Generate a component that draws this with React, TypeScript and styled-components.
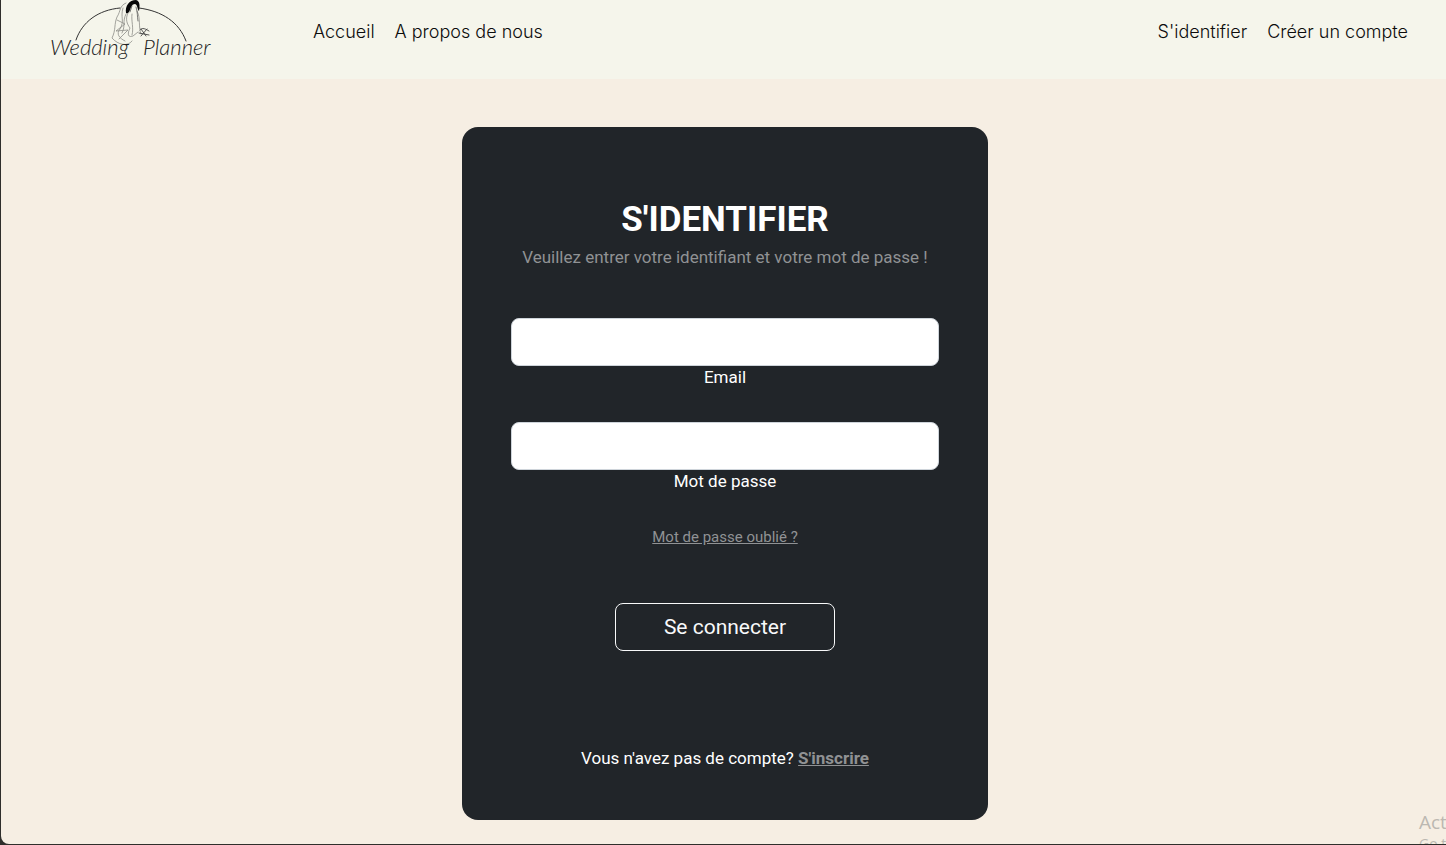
import React from "react";
import styled, { createGlobalStyle } from "styled-components";

const GlobalStyle = createGlobalStyle`
  * { box-sizing: border-box; }
  body { margin: 0; background: #2f2e2b; font-family: Roboto, sans-serif; font-size: 17px; line-height: 22px; }
`;

const Page = styled.div`
  position: relative;
  display: flex;
  flex-direction: column;
  min-height: calc(100vh - 1px);
  margin-left: 1px;
  background: #f6eee3;
  border-bottom-left-radius: 8px;
  overflow: hidden;
`;

const Header = styled.header`
  display: flex;
  align-items: flex-start;
  height: 79px;
  padding: 0 38px 0 48px;
  background: #f5f5eb;
`;

const LogoLink = styled.a`
  display: block;
  width: 168px;
  height: 72px;
  margin-right: 96px;
`;

const NavGroup = styled.nav<{ $end?: boolean }>`
  display: flex;
  gap: 20px;
  padding-top: 20px;
  margin-left: ${(p) => (p.$end ? "auto" : "0")};
`;

const NavLink = styled.a`
  color: #0c0c0c;
  font-family: Inter, sans-serif;
  font-size: 18px;
  font-weight: 300;
  line-height: 24px;
  text-decoration: none;
  white-space: nowrap;
`;

const Main = styled.main`
  flex: 1;
  display: flex;
  justify-content: center;
  align-items: flex-start;
  padding: 48px 0 24px 3px;
`;

const Card = styled.form`
  display: flex;
  flex-direction: column;
  align-items: center;
  width: 100%;
  max-width: 526px;
  padding: 73px 49px 51px;
  border-radius: 16px;
  background: #212529;
  color: #fff;
`;

const Title = styled.h1`
  margin: 0 0 6px;
  font-size: 35px;
  font-weight: 700;
  line-height: 40px;
  text-transform: uppercase;
`;

const Lead = styled.p`
  margin: 0 0 50px;
  color: #909294;
`;

const Field = styled.div`
  display: flex;
  flex-direction: column;
  align-items: center;
  width: 100%;
  margin-bottom: 34px;
`;

const Input = styled.input`
  width: 100%;
  height: 48px;
  padding: 8px 16px;
  border: 1px solid #ced4da;
  border-radius: 8px;
  background: #fff;
  font: inherit;
  font-size: 20px;
`;

const MutedLink = styled.a<{ $strong?: boolean; $small?: boolean }>`
  color: #909294;
  font-size: ${(p) => (p.$small ? "15px" : "17px")};
  font-weight: ${(p) => (p.$strong ? 700 : 400)};
`;

const Submit = styled.button`
  height: 48px;
  margin: 55px 0 96px;
  padding: 0 48px;
  border: 1px solid #f8f9fa;
  border-radius: 8px;
  background: transparent;
  color: #f8f9fa;
  font: inherit;
  font-size: 21px;
`;

const SignUp = styled.p`
  margin: 0;
`;

const Watermark = styled.div`
  position: absolute;
  top: 810px;
  left: calc(100% - 27px);
  color: #bcb8b1;
  font-family: "Open Sans", sans-serif;
  font-size: 19px;
  line-height: 24px;
  white-space: nowrap;
`;

const WatermarkHint = styled.div`
  font-size: 14px;
  line-height: 20px;
`;

function Logo() {
  return (
    <svg width="168" height="72" viewBox="49 0 168 72" fill="none" stroke="#333" strokeLinecap="round" role="img" aria-label="Wedding Planner">
      <path d="M76 40C82 22 98 10 120 8M139 8C162 11 179 22 186 41" strokeWidth="1" />
      <g stroke="#8d8d88" strokeWidth="0.8">
        <path d="M126 3C119 6 121 11 117 17C114 24 116 30 112 38C118 45 128 47 132 41" />
        <path d="M123 8C120 18 125 20 120 29C116 34 119 38 125 41M126 14C122 22 126 25 122 33M117 20L125 24L116 31L128 30L119 39" />
        <path d="M128 13C125 19 127 24 130 28C127 34 128 38 133 36L138 32" />
        <path d="M137 11C141 18 138 26 141 34M132 14C131 21 134 28 132 35" />
      </g>
      <path d="M130 12L132 6M136 7C138 13 137 16 138 21" stroke="#444" strokeWidth="0.7" />
      <path d="M126 13C125 6 129 0 136 0C140 1 140 6 139 11C137 9 138 5 135 4C132 4 131 7 130 10C129 12 128 14 126 13Z" fill="#080808" stroke="none" />
      <path d="M140 30C142 27 146 29 149 31M139 33L149 35M141 29L146 36M147 29L141 36" stroke="#444" strokeWidth="0.9" />
      <g fill="#222" stroke="none" fontFamily="Lato, sans-serif" fontStyle="italic" fontWeight="300" fontSize="22">
        <text x="50" y="55">Wedding</text>
        <text x="143" y="55">Planner</text>
      </g>
    </svg>
  );
}

export default function App() {
  return (
    <>
      <GlobalStyle />
      <Page>
        <Header>
          <LogoLink href="#"><Logo /></LogoLink>
          <NavGroup>
            <NavLink href="#">Accueil</NavLink>
            <NavLink href="#">A propos de nous</NavLink>
          </NavGroup>
          <NavGroup $end>
            <NavLink href="#">S'identifier</NavLink>
            <NavLink href="#">Créer un compte</NavLink>
          </NavGroup>
        </Header>
        <Main>
          <Card onSubmit={(e) => e.preventDefault()}>
            <Title>S'identifier</Title>
            <Lead>Veuillez entrer votre identifiant et votre mot de passe !</Lead>
            <Field>
              <Input id="email" type="email" />
              <label htmlFor="email">Email</label>
            </Field>
            <Field>
              <Input id="password" type="password" />
              <label htmlFor="password">Mot de passe</label>
            </Field>
            <MutedLink href="#" $small>Mot de passe oublié ?</MutedLink>
            <Submit type="submit">Se connecter</Submit>
            <SignUp>
              Vous n'avez pas de compte? <MutedLink href="#" $strong>S'inscrire</MutedLink>
            </SignUp>
          </Card>
        </Main>
        <Watermark>
          Act
          <WatermarkHint>Go t</WatermarkHint>
        </Watermark>
      </Page>
    </>
  );
}
